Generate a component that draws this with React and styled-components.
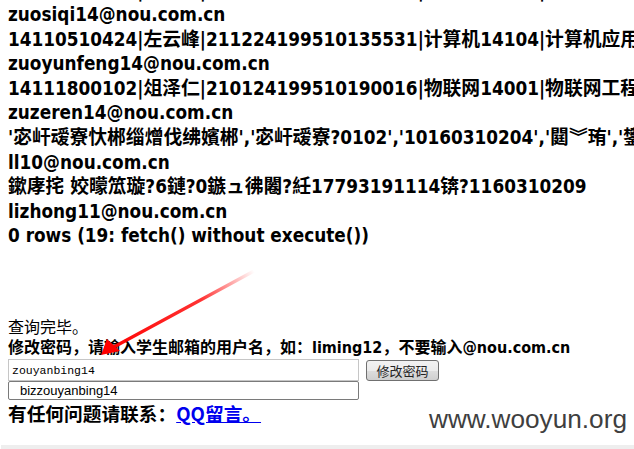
import React from 'react';
import styled, { createGlobalStyle } from 'styled-components';

const GlobalStyle = createGlobalStyle`
    html, body {
        margin: 0;
        padding: 0;
        background: #fff;
        overflow: hidden;
    }
`;

const Page = styled.div`
    position: relative;
    width: 634px;
    height: 449px;
    overflow: hidden;
    display: flex;
    flex-direction: column;
`;

const Results = styled.div`
    margin-top: -21.5px;
    padding: 0 8px;
    font-family: "DejaVu Sans Condensed", "DejaVu Sans", "Noto Sans CJK SC", sans-serif;
    font-stretch: condensed;
    font-weight: bold;
    font-size: 18.8px;
    line-height: 24.6px;
    color: #000;
    white-space: nowrap;
`;

const Line = styled.div``;

const Body = styled.div`
    margin-top: 66px;
    padding: 0 8px;
    font-family: "DejaVu Sans Condensed", "DejaVu Sans", "Noto Sans CJK SC", sans-serif;
    font-stretch: condensed;
    white-space: nowrap;
`;

const Done = styled.div`
    font-family: "Noto Sans CJK SC", sans-serif;
    font-size: 16px;
    line-height: 22px;
`;

const Hint = styled.div`
    font-weight: bold;
    font-size: 16px;
    line-height: 22px;
`;

const FormRow = styled.div`
    display: flex;
    align-items: center;
    gap: 7px;
`;

const Field = styled.input`
    box-sizing: border-box;
    width: 351px;
    height: ${p => p.$tall ? 22 : 19}px;
    margin: 0;
    padding: 0 ${p => p.$indent ? 11 : 3}px;
    border: 1px solid ${p => p.$dark ? '#7a7a7a' : '#c6c6c6'};
    border-radius: ${p => p.$dark ? 2 : 0}px;
    font-family: ${p => p.$mono ? '"Liberation Mono", monospace' : '"Liberation Sans", sans-serif'};
    font-size: ${p => p.$mono ? 11.5 : 13}px;
    color: #000;
    background: #fff;
    outline: none;
`;

const Button = styled.button`
    box-sizing: border-box;
    width: 73px;
    height: 21px;
    margin: 0;
    padding: 0;
    border: 1px solid #707070;
    border-radius: 3px;
    background: linear-gradient(#f2f2f2, #ebebeb 50%, #dddddd 51%, #cfcfcf);
    font-family: "Noto Sans CJK SC", sans-serif;
    font-size: 13px;
    color: #222;
`;

const Contact = styled.div`
    margin-top: 1px;
    font-family: "Noto Sans CJK SC", sans-serif;
    font-weight: bold;
    font-size: 18.7px;
    line-height: 24px;
`;

const Link = styled.a`
    color: #0000ee;
    text-decoration: underline;
`;

const Strip = styled.div`
    margin-top: auto;
    margin-left: 1px;
    height: 4px;
    background: #eeeeee;
`;

const Watermark = styled.div`
    position: absolute;
    left: 429px;
    top: 404px;
    font-family: "Liberation Sans", Arial, sans-serif;
    font-size: 26.2px;
    color: #3f3f3f;
`;

const Arrow = styled.svg`
    position: absolute;
    left: 0;
    top: 0;
    pointer-events: none;
`;

const rows = [
    '14110510423|左思琪|211224199510135520|计算机14104|计算机应用技术',
    'zuosiqi14@nou.com.cn',
    '14110510424|左云峰|211224199510135531|计算机14104|计算机应用技术',
    'zuoyunfeng14@nou.com.cn',
    '14111800102|俎泽仁|210124199510190016|物联网14001|物联网工程',
    'zuzeren14@nou.com.cn',
    "'宓屽叆寮忕郴缁熷伐绋嬪郴','宓屽叆寮?0102','10160310204','閮︾珛','鐢熷竷'",
    'll10@nou.com.cn',
    '鏉庨挓 姣曚笟璇?6鏈?0鏃ュ彿闂?紝17793191114锛?1160310209',
    'lizhong11@nou.com.cn',
    '0 rows (19: fetch() without execute())',
];

const App = () => {
    return (
        <Page>
            <GlobalStyle />
            <Results>
                {rows.map((r, i) => <Line key={i}>{r}</Line>)}
            </Results>
            <Body>
                <Done>查询完毕。</Done>
                <Hint>修改密码，请输入学生邮箱的用户名，如：liming12，不要输入@nou.com.cn</Hint>
                <FormRow>
                    <Field $mono $tall defaultValue="zouyanbing14" />
                    <Button>修改密码</Button>
                </FormRow>
                <FormRow>
                    <Field $dark $indent defaultValue="bizzouyanbing14" />
                </FormRow>
                <Contact>有任何问题请联系：<Link href="#">QQ留言。</Link></Contact>
            </Body>
            <Strip />
            <Watermark>www.wooyun.org</Watermark>
            <Arrow width="634" height="449">
                <defs>
                    <linearGradient id="fade" x1="254" y1="271" x2="104" y2="352" gradientUnits="userSpaceOnUse">
                        <stop offset="0" stopColor="#ff0000" stopOpacity="0" />
                        <stop offset="0.35" stopColor="#ff0000" stopOpacity="0.8" />
                        <stop offset="1" stopColor="#ff0000" />
                    </linearGradient>
                </defs>
                <path d="M254 271 L112 348" stroke="url(#fade)" strokeWidth="3.2" strokeLinecap="round" fill="none" />
                <path d="M101 355 L107 339 L120 351 Z" fill="#ff0000" />
            </Arrow>
        </Page>
    );
};

export default App;
